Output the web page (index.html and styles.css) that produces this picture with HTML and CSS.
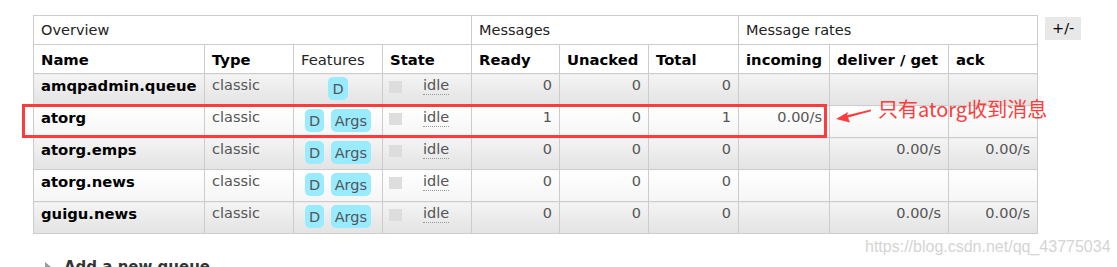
FILE: index.html
```html
<!DOCTYPE html>
<html lang="en">
<head>
    <meta charset="UTF-8">
    <meta name="viewport" content="width=device-width, initial-scale=1.0">
    <title>Queues</title>
    <link rel="stylesheet" href="styles.css">
</head>
<body>
    <div class="section">
        <div class="table-wrap">
            <table class="list">
                <colgroup>
                    <col class="c-name"><col class="c-type"><col class="c-feat"><col class="c-state">
                    <col class="c-ready"><col class="c-unacked"><col class="c-total">
                    <col class="c-in"><col class="c-deliver"><col class="c-ack">
                </colgroup>
                <thead>
                    <tr class="group">
                        <th colspan="4">Overview</th>
                        <th colspan="3">Messages</th>
                        <th colspan="3">Message rates</th>
                    </tr>
                    <tr class="cols">
                        <th>Name</th>
                        <th>Type</th>
                        <th class="plain">Features</th>
                        <th>State</th>
                        <th>Ready</th>
                        <th>Unacked</th>
                        <th>Total</th>
                        <th>incoming</th>
                        <th>deliver / get</th>
                        <th>ack</th>
                    </tr>
                </thead>
                <tbody>
                    <tr class="alt1">
                        <td class="name">amqpadmin.queue</td>
                        <td>classic</td>
                        <td class="feat"><span class="badge">D</span></td>
                        <td><span class="state"><span class="status"></span><abbr>idle</abbr></span></td>
                        <td class="num">0</td>
                        <td class="num">0</td>
                        <td class="num">0</td>
                        <td class="num"></td>
                        <td class="num"></td>
                        <td class="num"></td>
                    </tr>
                    <tr class="alt2">
                        <td class="name">atorg</td>
                        <td>classic</td>
                        <td class="feat"><span class="badge">D</span> <span class="badge">Args</span></td>
                        <td><span class="state"><span class="status"></span><abbr>idle</abbr></span></td>
                        <td class="num">1</td>
                        <td class="num">0</td>
                        <td class="num">1</td>
                        <td class="num">0.00/s</td>
                        <td class="num"></td>
                        <td class="num"></td>
                    </tr>
                    <tr class="alt1">
                        <td class="name">atorg.emps</td>
                        <td>classic</td>
                        <td class="feat"><span class="badge">D</span> <span class="badge">Args</span></td>
                        <td><span class="state"><span class="status"></span><abbr>idle</abbr></span></td>
                        <td class="num">0</td>
                        <td class="num">0</td>
                        <td class="num">0</td>
                        <td class="num"></td>
                        <td class="num">0.00/s</td>
                        <td class="num">0.00/s</td>
                    </tr>
                    <tr class="alt2">
                        <td class="name">atorg.news</td>
                        <td>classic</td>
                        <td class="feat"><span class="badge">D</span> <span class="badge">Args</span></td>
                        <td><span class="state"><span class="status"></span><abbr>idle</abbr></span></td>
                        <td class="num">0</td>
                        <td class="num">0</td>
                        <td class="num">0</td>
                        <td class="num"></td>
                        <td class="num"></td>
                        <td class="num"></td>
                    </tr>
                    <tr class="alt1">
                        <td class="name">guigu.news</td>
                        <td>classic</td>
                        <td class="feat"><span class="badge">D</span> <span class="badge">Args</span></td>
                        <td><span class="state"><span class="status"></span><abbr>idle</abbr></span></td>
                        <td class="num">0</td>
                        <td class="num">0</td>
                        <td class="num">0</td>
                        <td class="num"></td>
                        <td class="num">0.00/s</td>
                        <td class="num">0.00/s</td>
                    </tr>
                </tbody>
            </table>

            <!-- red note drawn over the atorg row -->
            <div class="mark-box"></div>
            <svg class="mark-arrow" width="40" height="16" viewBox="0 0 40 16">
                <polygon points="1,10 13,3 12,6.3 36,0.5 36,2.2 13,8.6 15,13.5" fill="#ff3b3b"/>
            </svg>
            <div class="mark-text">只有atorg收到消息</div>
        </div>
        <span class="toggle">+/-</span>
    </div>

    <div class="add-queue"><span class="arrow-right"></span>Add a new queue</div>
    <div class="watermark">https://blog.csdn.net/qq_43775034</div>
</body>
</html>
```

FILE: styles.css
```css
body {
    margin: 0;
    padding: 15px 0 0 33px;
    font-family: "DejaVu Sans", Verdana, sans-serif;
    font-size: 14.5px;
    color: #484848;
    background-color: #fff;
    overflow: hidden;
    height: 267px;
    box-sizing: border-box;
    position: relative;
}
.section {
    display: flex;
    align-items: flex-start;
}
.table-wrap {
    position: relative;
}
.list {
    border-collapse: collapse;
    table-layout: fixed;
    width: 1005px;
}
.c-name { width: 171px; }
.c-type { width: 89px; }
.c-feat { width: 89px; }
.c-state { width: 89px; }
.c-ready { width: 88px; }
.c-unacked { width: 89px; }
.c-total { width: 90px; }
.c-in { width: 91px; }
.c-deliver { width: 119px; }
.c-ack { width: 89px; }
.list th,
.list td {
    border: 1px solid #ccc;
    padding: 0 7px;
    text-align: left;
    white-space: nowrap;
    overflow: hidden;
}
.list th {
    height: 28px;
    background-color: #fff;
    color: #000;
}
.list .cols th {
    font-size: 14.8px;
}
.list .group th {
    font-weight: normal;
    color: #222;
}
.list .cols th.plain {
    font-weight: normal;
    color: #222;
}
.list td {
    height: 32px;
    box-sizing: border-box;
    padding-top: 3px;
    vertical-align: top;
    color: #555;
    line-height: 17px;
}
.list tr.alt1 td {
    background: linear-gradient(#f4f4f4, #e3e3e3);
}
.list tr.alt2 td {
    background: linear-gradient(#fff, #f5f5f5);
}
.list td.name {
    font-weight: bold;
    font-size: 14.8px;
    color: #000;
}
.list td.num {
    text-align: right;
}
.list td.feat {
    text-align: center;
    padding-left: 0;
    padding-right: 0;
}
.badge {
    display: inline-block;
    background-color: #99ebff;
    color: #555;
    border-radius: 5px;
    padding: 0 4px;
    height: 23px;
    line-height: 24px;
    vertical-align: top;
}
.badge + .badge {
    margin-left: 2px;
}
.state {
    display: flex;
    align-items: flex-start;
}
.status {
    width: 13px;
    height: 12px;
    background-color: #ddd;
    margin-right: 21px;
    margin-left: -1px;
    margin-top: 4px;
}
abbr {
    text-decoration: none;
    border-bottom: 1px dotted #999;
    line-height: 17px;
}
.toggle {
    margin-left: 7px;
    margin-top: 2px;
    background-color: #e8e8e8;
    color: #000;
    padding: 0 7px;
    height: 23px;
    line-height: 23px;
}
.mark-box {
    position: absolute;
    left: -11px;
    top: 89px;
    width: 799px;
    height: 28px;
    border: 3px solid #ff3b3b;
}
.mark-arrow {
    position: absolute;
    left: 802px;
    top: 94px;
}
.mark-text {
    position: absolute;
    left: 845px;
    top: 79px;
    font-family: "Noto Sans CJK SC", sans-serif;
    font-size: 20px;
    line-height: 30px;
    color: #ff3b3b;
    white-space: nowrap;
}
.add-queue {
    margin-top: 24px;
    margin-left: 12px;
    font-weight: bold;
    color: #333;
    font-size: 15px;
    display: flex;
    align-items: center;
}
.arrow-right {
    width: 0;
    height: 0;
    border-top: 5px solid transparent;
    border-bottom: 5px solid transparent;
    border-left: 6px solid #999;
    margin-right: 13px;
}
.watermark {
    position: absolute;
    left: 865px;
    top: 238px;
    font-family: "Liberation Sans", Arial, sans-serif;
    font-size: 16px;
    color: #d4d4d4;
}
```
